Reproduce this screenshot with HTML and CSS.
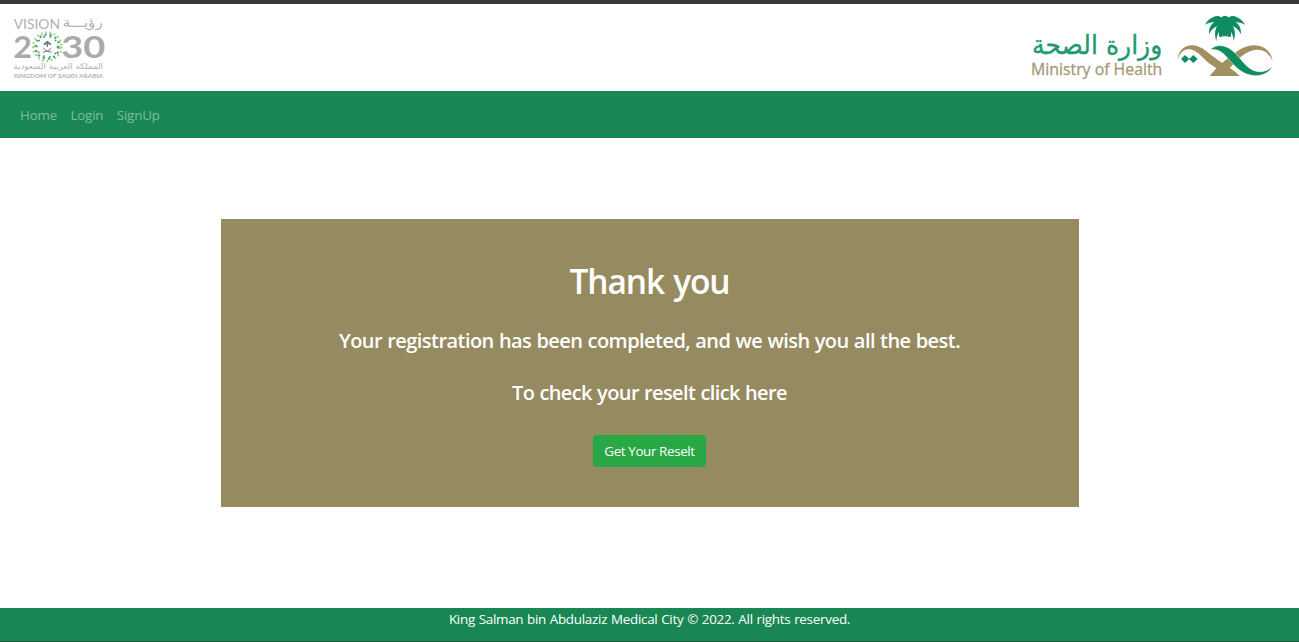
FILE: index.html
```html
<!DOCTYPE html>
<html lang="en">
<head>
<meta charset="utf-8">
<title>Thank you</title>
<link rel="stylesheet" href="styles.css">
</head>
<body>
<header class="header">
  <svg class="vision" viewBox="0 0 360 270" role="img" aria-label="Vision 2030">
    <g class="vision-text">
      <text x="41" y="87" font-size="42" textLength="139" lengthAdjust="spacingAndGlyphs">VISION</text>
      <text x="188" y="82" font-size="40" textLength="120" lengthAdjust="spacingAndGlyphs" class="arabic">رؤيـــة</text>
      <text x="40" y="174" font-size="92" textLength="56" lengthAdjust="spacingAndGlyphs" class="digits">2</text>
      <text x="184" y="174" font-size="92" textLength="132" lengthAdjust="spacingAndGlyphs" class="digits">30</text>
      <text x="40" y="208" font-size="24" textLength="269" lengthAdjust="spacingAndGlyphs" class="arabic">المملكة العربية السعودية</text>
      <text x="41" y="233" font-size="18" textLength="268" lengthAdjust="spacingAndGlyphs" class="kingdom">KINGDOM OF SAUDI ARABIA</text>
    </g>
    <g fill="none">
      <circle cx="142" cy="140" r="43" stroke="#8fc9c1" stroke-width="6" stroke-dasharray="5 8"/>
      <circle cx="142" cy="140" r="36" stroke="#4da45b" stroke-width="7" stroke-dasharray="6 10"/>
      <circle cx="142" cy="140" r="31" stroke="#2f94c8" stroke-width="5" stroke-dasharray="5 14"/>
      <circle cx="142" cy="140" r="40" stroke="#d0d84a" stroke-width="6" stroke-dasharray="5 19"/>
    </g>
    <path d="M140 141v-9q-6 4-10 2q1-7 8-7q-1-5 4-5t4 5q7 0 8 7q-4 2-10-2v9z" fill="#777b80"/>
    <path d="M130 144q4 9 25 13m-1-13q-4 9-25 13" fill="none" stroke="#777b80" stroke-width="3"/>
  </svg>
  <div class="ministry">
    <svg class="ministry-name" viewBox="0 0 450 285" role="img" aria-label="Ministry of Health">
      <text x="36" y="162" font-size="80" textLength="391" lengthAdjust="spacingAndGlyphs" class="arabic ministry-ar">وزارة الصحة</text>
      <text x="33" y="226" font-size="48" textLength="394" lengthAdjust="spacingAndGlyphs" class="ministry-en">Ministry of Health</text>
    </svg>
    <svg class="emblem" viewBox="0 0 402 285" aria-hidden="true">
      <g fill="#a39061">
        <path d="M37 180C40 153 57 136 81 136c21 0 38 13 57 29l43 31c16 9 32 20 43 32h-36L128 187c-18-17-32-35-52-39-19-3-32 10-39 32z"/>
        <path d="M134 228c17-22 42-45 69-64 19-15 39-28 65-28 29 0 50 19 55 46-10-21-25-34-47-33-22 1-43 15-59 31l-46 48z"/>
        <path d="M150 214l30-18 32 32h-60z"/>
      </g>
      <path d="M135 149c10-8 21-13 33-12 22 1 39 18 54 35 17 20 33 42 61 43 19 1 32-9 40-17-10 19-29 29-51 29-36 0-58-23-79-47-17-20-31-35-58-31z" fill="#0f8d60" stroke="#fff" stroke-width="1.5"/>
      <path d="M60 165l13 12-13 12-12-12zM85 165l13 12-13 12-13-12z" fill="#0f8d60"/>
      <g fill="#0f8d60">
        <path d="M180 66C170 47 156 45 144 52c-10 4-19 12-24 23 12-9 25-10 39-6z"/>
        <path d="M180 66c10-19 24-21 36-14 10 4 19 12 24 23-12-9-25-10-39-6z"/>
        <path d="M178 60c-28-3-48 13-46 43 9-17 21-26 38-27zM182 60c28-3 48 13 46 43-9-17-21-26-38-27z"/>
        <path d="M177 63c-23 8-33 29-23 61 1-21 9-34 22-45zM183 63c23 8 33 29 23 61-1-21-9-34-22-45z"/>
        <path d="M178 66c-14 12-20 27-15 44l9 1 7-34zM182 66c14 12 20 27 15 44l-9 1-7-34z"/>
        <path d="M166 54q10-7 14-7t14 7l-9 22 2 33h-14l2-33z"/>
      </g>
    </svg>
  </div>
</header>
<nav class="nav">
  <a class="nav-link">Home</a>
  <a class="nav-link">Login</a>
  <a class="nav-link">SignUp</a>
</nav>
<main class="main">
  <section class="card">
    <h1 class="title">Thank you</h1>
    <p class="message">Your registration has been completed, and we wish you all the best.</p>
    <p class="hint">To check your reselt click here</p>
    <button class="button" type="button">Get Your Reselt</button>
  </section>
</main>
<footer class="footer"><span>King Salman bin Abdulaziz Medical City © 2022. All rights reserved.</span></footer>
</body>
</html>
```
FILE: styles.css
```css
* { box-sizing: border-box; }
body {
  margin: 0;
  height: 642px;
  display: flex;
  flex-direction: column;
  overflow: hidden;
  background: #fff;
  font-family: "Open Sans", "Noto Sans", sans-serif;
}
.header {
  height: 91px;
  flex: none;
  display: flex;
  justify-content: space-between;
  background: linear-gradient(#38373d 4px, #fff 4px);
}
.header svg { overflow: visible; }
.vision { width: 120px; height: 90px; }
.vision-text { fill: #b1b1b4; font-family: Lato, sans-serif; }
.vision-text .digits { font-weight: 700; fill: #aaaaad; }
.vision-text .kingdom { font-weight: 700; }
.arabic, .vision-text .arabic { font-family: "DejaVu Sans", sans-serif; }
.ministry { display: flex; width: 279px; }
.ministry-name { width: 150px; height: 95px; flex: none; margin-right: -5px; }
.emblem { width: 134px; height: 95px; flex: none; }
.ministry-ar { fill: #229a70; stroke: #229a70; stroke-width: 1; }
.ministry-en { fill: #a39776; stroke: #a39776; stroke-width: 0.8; font-family: "Open Sans", sans-serif; }
.nav {
  height: 47px;
  flex: none;
  display: flex;
  align-items: center;
  gap: 13.4px;
  padding: 1px 0 0 20px;
  background: #198754;
  color: #7fbd9d;
  font-size: 13.4px;
  letter-spacing: -0.2px;
}
.main { flex: 1; padding-top: 81px; }
.card {
  width: 858px;
  height: 288px;
  margin: 0 auto;
  padding-top: 38px;
  display: flex;
  flex-direction: column;
  align-items: center;
  background: #958a60;
  color: #fff;
}
.title { margin: 0; font-size: 33.5px; line-height: 48px; font-weight: 600; letter-spacing: -1.1px; word-spacing: 1.5px; }
.message,
.hint {
  font-size: 20px;
  line-height: 30px;
  font-weight: 600;
  letter-spacing: -0.55px;
  word-spacing: 0.5px;
  white-space: nowrap;
}
.message { margin: 21px 0 0; }
.hint { margin: 22px 0 0; letter-spacing: -0.6px; }
.button {
  width: 113px;
  height: 32px;
  margin: 27px 0 0;
  padding: 0;
  border: 0;
  border-radius: 3.5px;
  background: #28a745;
  color: #fff;
  font: 13.4px "Open Sans", sans-serif;
  letter-spacing: -0.38px;
}
.footer {
  height: 34px;
  flex: none;
  border-bottom: 1px solid #20513c;
  background: #198754;
  color: #fff;
  font-size: 13.4px;
  line-height: 22px;
  letter-spacing: -0.26px;
  word-spacing: 0.5px;
  text-align: center;
}
```
